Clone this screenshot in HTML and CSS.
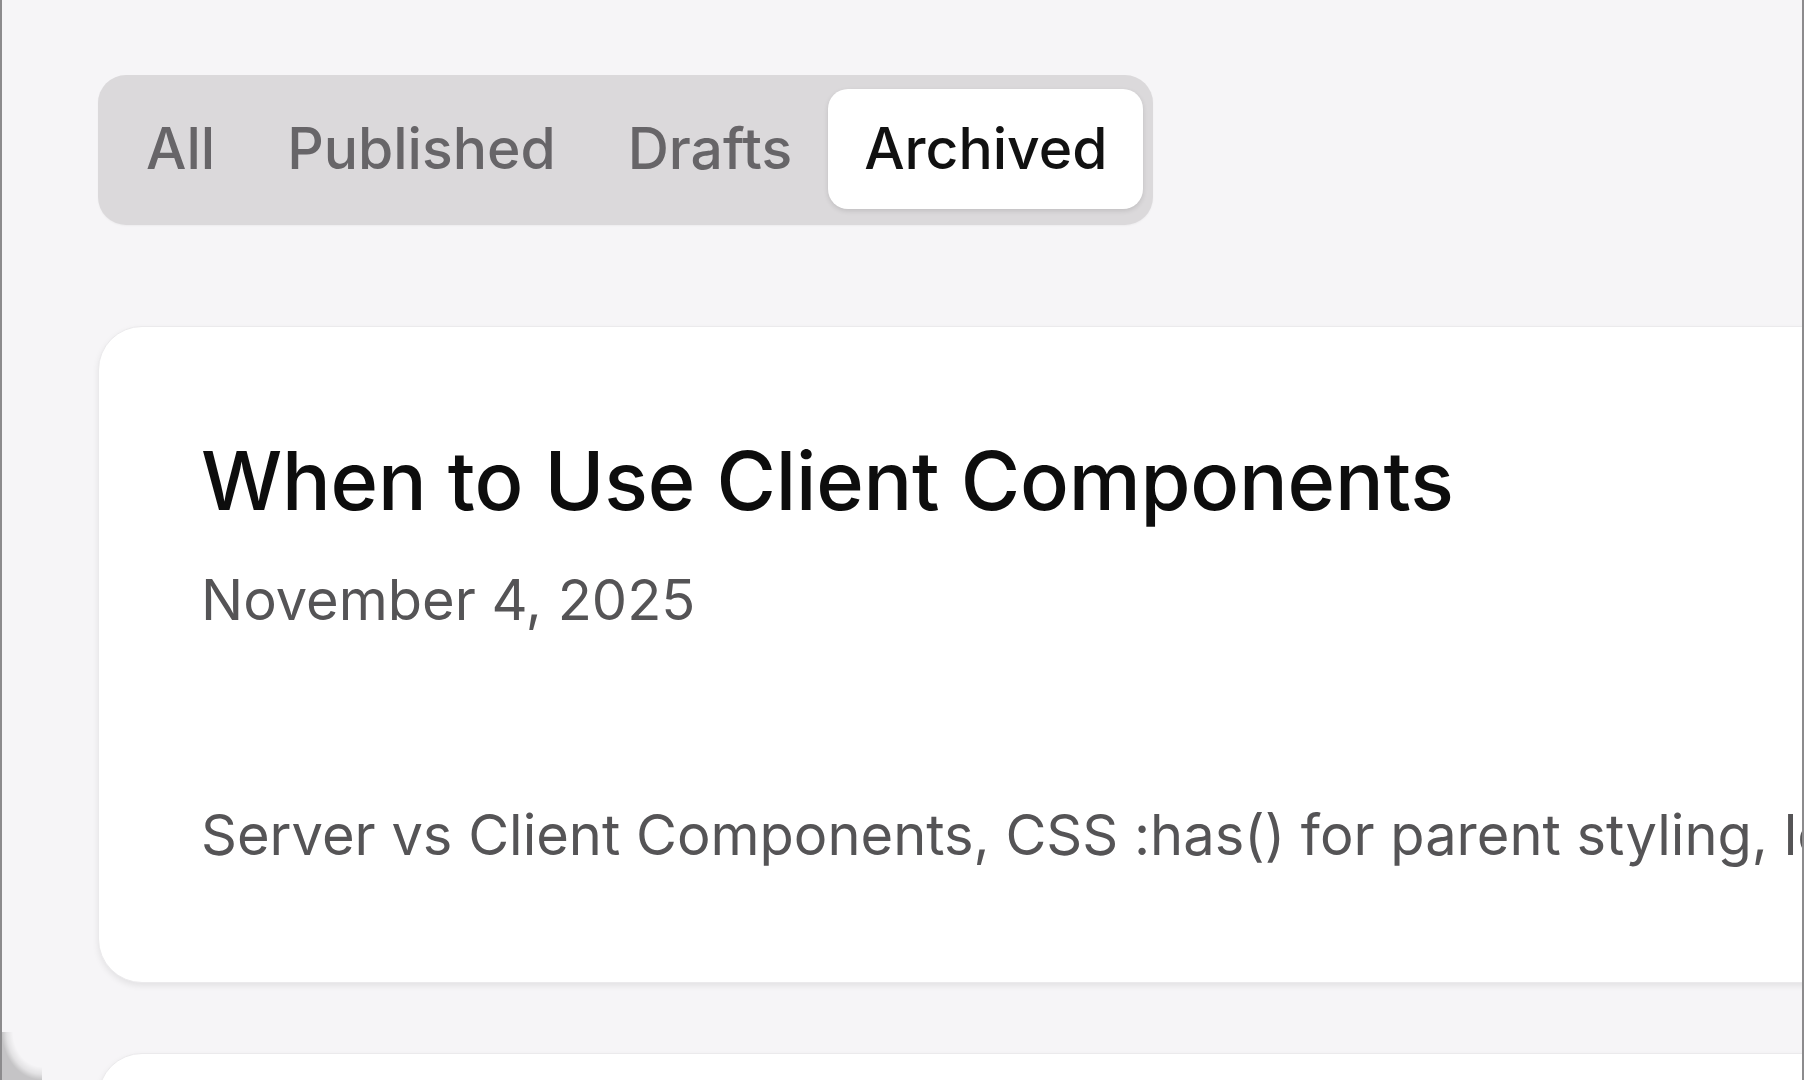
FILE: index.html
```html
<!DOCTYPE html>
<html lang="en">
<head>
<meta charset="utf-8">
<title>Posts</title>
<link rel="stylesheet" href="styles.css">
</head>
<body>
<div class="frame">
  <main class="page">
    <nav class="tabs">
      <button class="tab">All</button>
      <button class="tab">Published</button>
      <button class="tab">Drafts</button>
      <button class="tab tab-active">Archived</button>
    </nav>
    <section class="list">
      <article class="card">
        <h2 class="card-title">When to Use Client Components</h2>
        <p class="card-date">November 4, 2025</p>
        <p class="card-desc">Server vs Client Components, CSS :has() for parent styling, learning</p>
      </article>
      <article class="card card-next"></article>
    </section>
  </main>
  <div class="corner"></div>
</div>
</body>
</html>
```

FILE: styles.css
```css
html, body {
  margin: 0;
  padding: 0;
  height: 100%;
}

body {
  background: #f6f5f7;
  font-family: Inter, "Noto Sans", "Liberation Sans", sans-serif;
  overflow: hidden;
}

.frame {
  position: relative;
  height: 1080px;
  box-sizing: border-box;
  border-left: 2px solid #8c8b8d;
  border-right: 2px solid #8c8b8d;
  overflow: hidden;
  background: #f6f5f7;
}

.page {
  width: 1900px;
  padding: 75px 0 0 96px;
  display: flex;
  flex-direction: column;
  align-items: flex-start;
}

.tabs {
  display: flex;
  align-items: center;
  padding: 14px 10px 16px 12px;
  background: #dbd9db;
  border-radius: 28px;
  box-shadow: 0 1px 2px rgba(0, 0, 0, 0.04);
}

.tab {
  font-family: inherit;
  font-size: 57px;
  font-weight: 500;
  line-height: 120px;
  height: 120px;
  padding: 0 36px;
  border: 0;
  background: transparent;
  color: #676568;
  border-radius: 20px;
  cursor: pointer;
}

.tab-active {
  background: #ffffff;
  color: #111111;
  box-shadow: 0 2px 5px rgba(0, 0, 0, 0.12);
}

.list {
  margin-top: 101px;
  display: flex;
  flex-direction: column;
  gap: 70px;
  width: 1800px;
}

.card {
  background: #ffffff;
  border: 1px solid #ebeaec;
  border-radius: 44px;
  box-shadow: 0 3px 6px rgba(0, 0, 0, 0.08);
  padding: 105px 102px 113px;
}

.card-next {
  height: 400px;
  padding: 0;
}

.card-title {
  margin: 0;
  font-size: 81px;
  font-weight: 500;
  line-height: 98px;
  color: #0d0d0d;
  letter-spacing: -0.2px;
}

.card-date {
  margin: 37px 0 0;
  font-size: 56px;
  line-height: 67px;
  color: #555456;
}

.card-desc {
  margin: 168px 0 0;
  font-size: 56px;
  line-height: 67px;
  color: #555456;
  white-space: nowrap;
}

.corner {
  position: absolute;
  left: 0;
  bottom: 0;
  width: 40px;
  height: 48px;
  background: radial-gradient(ellipse 100% 100% at 100% 0%, rgba(0, 0, 0, 0) 72%, rgba(0, 0, 0, 0.08) 88%, rgba(0, 0, 0, 0.2) 100%);
  pointer-events: none;
}
```
